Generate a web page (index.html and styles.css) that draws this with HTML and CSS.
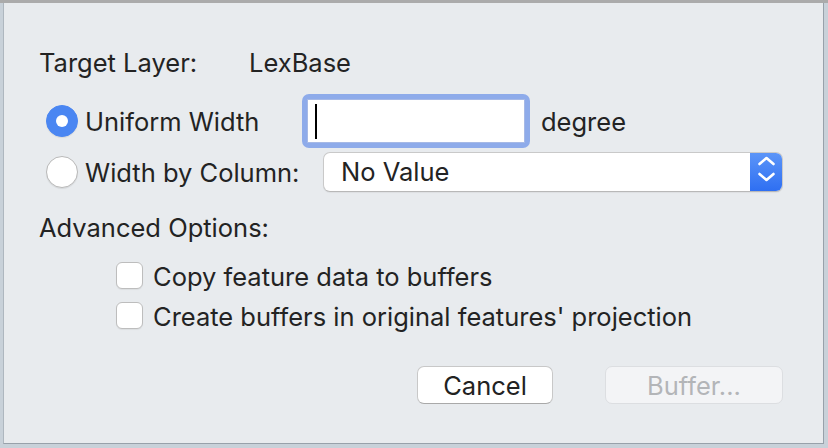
FILE: index.html
```html
<!DOCTYPE html>
<html>
<head>
<meta charset="utf-8">
<link rel="stylesheet" href="styles.css">
</head>
<body>
<div class="topbar"></div>
<div class="dialog">
  <div class="row row-target">
    <span class="label-target">Target Layer:</span>
    <span class="value-target">LexBase</span>
  </div>
  <div class="row row-uniform">
    <span class="radio radio-on"><span class="radio-dot"></span></span>
    <span class="opt-label opt-uniform">Uniform Width</span>
    <span class="field-ring"><span class="field"><span class="caret"></span></span></span>
    <span class="unit">degree</span>
  </div>
  <div class="row row-column">
    <span class="radio"></span>
    <span class="opt-label opt-column">Width by Column:</span>
    <span class="popup">
      <span class="popup-text">No Value</span>
      <span class="popup-arrows">
        <svg width="33" height="40" viewBox="0 0 33 40">
          <path d="M9.5 12 L16.5 6 L23.5 12" fill="none" stroke="#fff" stroke-width="2.6" stroke-linecap="round" stroke-linejoin="round"/>
          <path d="M9.5 22 L16.5 28 L23.5 22" fill="none" stroke="#fff" stroke-width="2.6" stroke-linecap="round" stroke-linejoin="round"/>
        </svg>
      </span>
    </span>
  </div>
  <div class="row row-advanced">Advanced Options:</div>
  <div class="checks">
    <div class="check-row"><span class="checkbox"></span><span class="check-label">Copy feature data to buffers</span></div>
    <div class="check-row"><span class="checkbox"></span><span class="check-label">Create buffers in original features' projection</span></div>
  </div>
  <div class="buttons">
    <span class="btn btn-cancel">Cancel</span>
    <span class="btn btn-disabled">Buffer...</span>
  </div>
</div>
</body>
</html>
```
FILE: styles.css
```css
html, body {
  margin: 0;
  padding: 0;
}
body {
  width: 828px;
  height: 448px;
  background: #c8d1d9;
  font-family: "Inter", "Liberation Sans", sans-serif;
  font-size: 25.5px;
  color: #232323;
  overflow: hidden;
}
.topbar {
  height: 3px;
  background: #ababab;
}
.dialog {
  box-sizing: border-box;
  margin-left: 3px;
  width: 821px;
  height: 441px;
  background: #e8ebee;
  border-left: 1px solid #aeb7bf;
  border-right: 1px solid #98a1aa;
  border-bottom: 1px solid #98a1aa;
  padding: 45px 40px 0 35px;
}
.row {
  display: flex;
  align-items: center;
  line-height: 30px;
}
.row-target {
  height: 30px;
}
.label-target {
  width: 210px;
}
.row-uniform {
  margin-top: 16px;
  height: 54px;
}
.row-column {
  margin-top: 4px;
  height: 40px;
}
.radio {
  box-sizing: border-box;
  width: 32px;
  height: 32px;
  border-radius: 50%;
  background: #fff;
  border: 1px solid #b9b9b9;
  box-shadow: 0 1px 1px rgba(0,0,0,0.08);
  margin-left: 7px;
  display: flex;
  align-items: center;
  justify-content: center;
  flex: none;
}
.radio-on {
  background: #4a86f2;
  border-color: #4a86f2;
}
.radio-dot {
  width: 12px;
  height: 12px;
  border-radius: 50%;
  background: #fff;
}
.opt-label {
  margin-left: 7px;
  padding-top: 2px;
  flex: none;
}
.opt-uniform {
  width: 217px;
}
.opt-column {
  width: 238px;
}
.field-ring {
  box-sizing: border-box;
  width: 228px;
  height: 54px;
  border-radius: 7px;
  background: #8eabea;
  padding: 5px;
  flex: none;
}
.field {
  box-sizing: border-box;
  display: block;
  height: 44px;
  background: #fff;
  border: 1px solid #a6b9e6;
  padding: 4px 0 0 7px;
}
.caret {
  display: block;
  width: 2px;
  height: 35px;
  background: #000;
}
.unit {
  margin-left: 11px;
  padding-top: 2px;
}
.popup {
  box-sizing: border-box;
  width: 460px;
  height: 40px;
  background: #fff;
  border: 1px solid #c9c9c9;
  border-bottom-color: #b8b8b8;
  border-radius: 7px;
  display: flex;
  overflow: hidden;
  box-shadow: 0 1px 1px rgba(0,0,0,0.05);
  flex: none;
}
.popup-text {
  flex: 1;
  padding-left: 17px;
  line-height: 38px;
}
.popup-arrows {
  width: 33px;
  height: 40px;
  margin: -1px -1px -1px 0;
  background: linear-gradient(#5d96f8, #2d6ef2);
  display: block;
}
.popup-arrows svg {
  display: block;
}
.row-advanced {
  margin-top: 21px;
  height: 30px;
}
.checks {
  margin-top: 19px;
  padding-left: 77px;
  display: flex;
  flex-direction: column;
  gap: 13px;
}
.check-row {
  display: flex;
  align-items: center;
  height: 27px;
}
.checkbox {
  box-sizing: border-box;
  width: 27px;
  height: 27px;
  background: #fff;
  border: 1px solid #bdbdbd;
  border-radius: 6px;
  box-shadow: 0 1px 1px rgba(0,0,0,0.06);
  flex: none;
}
.check-label {
  margin-left: 10px;
  padding-top: 2px;
  white-space: nowrap;
}
.buttons {
  margin-top: 37px;
  display: flex;
  justify-content: flex-end;
  gap: 52px;
}
.btn {
  box-sizing: border-box;
  height: 38px;
  border-radius: 7px;
  display: flex;
  align-items: center;
  justify-content: center;
}
.btn-cancel {
  width: 136px;
  background: #fff;
  border: 1px solid #c8c8c8;
  border-bottom-color: #a9a9a9;
  color: #222;
}
.btn-disabled {
  width: 178px;
  background: #f3f4f6;
  border: 1px solid #dcdee1;
  color: #b3b5b8;
}
```
